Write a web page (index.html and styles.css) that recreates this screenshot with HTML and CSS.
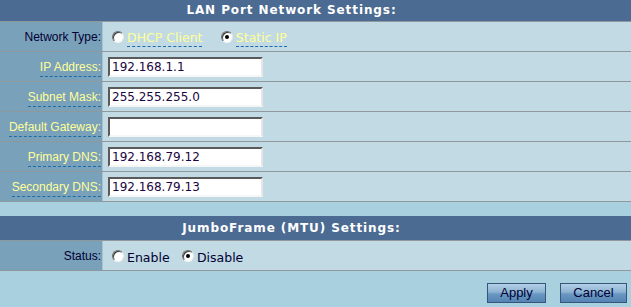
FILE: index.html
```html
<!DOCTYPE html>
<html lang="en">

<head>
  <meta charset="UTF-8">
  <title>LAN Port Network Settings</title>
  <link rel="stylesheet" href="styles.css">
</head>

<body>
  <div class="section-head first">LAN Port Network Settings:</div>
  <table class="form">
    <tr>
      <td class="label plain">Network Type:</td>
      <td class="value">
        <label class="choice"><input type="radio" name="nettype"><span class="hint">DHCP Client</span></label>
        <label class="choice"><input type="radio" name="nettype" checked><span class="hint">Static IP</span></label>
      </td>
    </tr>
    <tr>
      <td class="label"><span class="hint">IP Address:</span></td>
      <td class="value"><input class="field" type="text" value="192.168.1.1"></td>
    </tr>
    <tr>
      <td class="label"><span class="hint">Subnet Mask:</span></td>
      <td class="value"><input class="field" type="text" value="255.255.255.0"></td>
    </tr>
    <tr>
      <td class="label"><span class="hint">Default Gateway:</span></td>
      <td class="value"><input class="field" type="text" value=""></td>
    </tr>
    <tr>
      <td class="label"><span class="hint">Primary DNS:</span></td>
      <td class="value"><input class="field" type="text" value="192.168.79.12"></td>
    </tr>
    <tr>
      <td class="label"><span class="hint">Secondary DNS:</span></td>
      <td class="value"><input class="field" type="text" value="192.168.79.13"></td>
    </tr>
  </table>

  <div class="section-head second">JumboFrame (MTU) Settings:</div>
  <table class="form">
    <tr>
      <td class="label plain">Status:</td>
      <td class="value">
        <label class="choice tight"><input type="radio" name="jumbo"><span class="opt">Enable</span></label>
        <label class="choice tight"><input type="radio" name="jumbo" checked><span class="opt">Disable</span></label>
      </td>
    </tr>
  </table>

  <div class="actions">
    <button class="btn apply" type="button">Apply</button>
    <button class="btn cancel" type="button">Cancel</button>
  </div>
</body>

</html>
```

FILE: styles.css
```css
html,
body {
  margin: 0;
  padding: 0;
  width: 100%;
  height: 100%;
}

body {
  background-color: #a9d0df;
  font-family: "Liberation Sans", Arial, sans-serif;
  font-size: 12px;
  color: #000033;
}

/* 标题栏 */
.section-head {
  height: 24px;
  padding-right: 48px;
  line-height: 24px;
  background-color: #4b6b92;
  border-bottom: 1px solid #8e989d;
  color: #fff;
  font-family: "DejaVu Sans", Verdana, sans-serif;
  font-weight: bold;
  font-size: 12px;
  letter-spacing: 0.9px;
  text-align: center;
}

.section-head.first {
  height: 21px;
  line-height: 20px;
}

.section-head.second {
  margin-top: 14px;
}

.form {
  width: 100%;
  border-collapse: collapse;
}

.form td {
  height: 29px;
  padding: 0;
  border-bottom: 1px solid #8e989d;
}

.form td.label {
  width: 101px;
  padding-right: 1px;
  background-color: #7aa1ba;
  border-right: 1px solid #a8c2cf;
  text-align: right;
  white-space: nowrap;
}

.form td.value {
  padding-left: 5px;
  background-color: #c1dae3;
}

.hint {
  color: #ffff99;
  border-bottom: 1px dashed #1b6ca8;
  padding-bottom: 1px;
}

.label .hint {
  padding-bottom: 2px;
}

.choice {
  display: inline-flex;
  align-items: center;
  margin-right: 11px;
  font-family: "DejaVu Sans", Verdana, sans-serif;
  font-size: 12.5px;
}

.choice.tight {
  margin-right: 5px;
}

.choice .opt {
  color: #000033;
  margin-top: 3px;
}

.choice .hint {
  margin-top: 4px;
}

/* 单选框 仿经典样式 */
.choice input {
  -webkit-appearance: none;
  appearance: none;
  box-sizing: border-box;
  width: 12px;
  height: 12px;
  margin: 0 3px 0 4px;
  border-radius: 50%;
  border: 1px solid;
  border-color: #6d6d6d #e8e8e8 #f4f4f4 #6d6d6d;
  background-color: #fff;
  box-shadow: inset 1px 1px 0 #3c3c3c;
  position: relative;
}

.choice input:checked::after {
  content: "";
  position: absolute;
  left: 3px;
  top: 3px;
  width: 4px;
  height: 4px;
  border-radius: 50%;
  background-color: #000;
}

.field {
  box-sizing: border-box;
  width: 155px;
  height: 20px;
  margin: 1px 0 0 0;
  padding: 0 2px;
  border: 2px solid;
  border-color: #5a5a5a #e6e6e6 #f6f6f6 #5a5a5a;
  background-color: #fff;
  color: #1c0640;
  font-family: "DejaVu Sans", Verdana, sans-serif;
  font-size: 12px;
  vertical-align: middle;
}

.actions {
  display: flex;
  justify-content: flex-end;
  gap: 14px;
  padding: 12px 4px 0 0;
}

.btn {
  box-sizing: border-box;
  height: 20px;
  padding: 0;
  border: 1px solid #35557c;
  background: linear-gradient(#b3d0e6 0%, #8db3d3 45%, #6a98c3 55%, #5584b4 100%);
  color: #000033;
  font-family: "Liberation Sans", Arial, sans-serif;
  font-size: 13px;
  line-height: 18px;
}

.btn.apply {
  width: 59px;
}

.btn.cancel {
  width: 67px;
}
```
